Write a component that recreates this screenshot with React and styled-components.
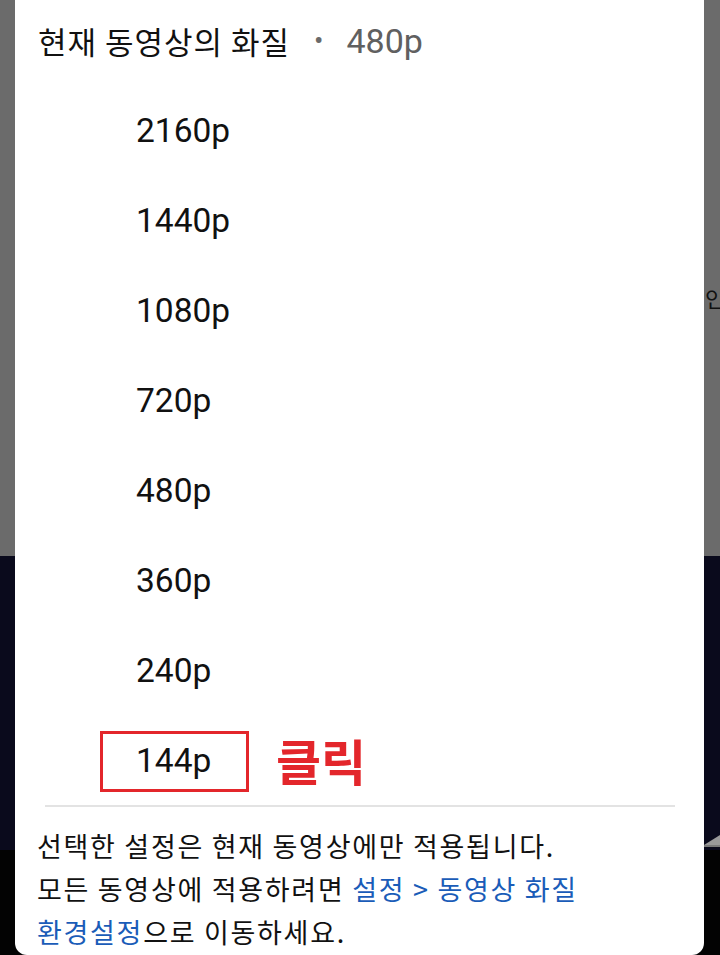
import React from "react";
import styled, { createGlobalStyle } from "styled-components";

const Global = createGlobalStyle`
  html, body { margin: 0; padding: 0; }
  body {
    width: 720px;
    height: 955px;
    overflow: hidden;
    background: linear-gradient(
      to bottom,
      #6b6b6b 0px, #6b6b6b 556px,
      #0a0a1c 556px, #0a0a1c 850px,
      #030303 850px
    );
    font-family: Roboto, "Noto Sans CJK KR", sans-serif;
  }
`;

const Stage = styled.div`
  display: flex;
  width: 720px;
  height: 955px;
`;

const SideStrip = styled.div`
  width: ${(p) => p.$w}px;
  flex: none;
  overflow: hidden;
  display: flex;
  flex-direction: column;
`;

const PeekText = styled.div`
  margin-top: 283px;
  margin-left: 1px;
  font-family: "Noto Sans CJK KR", sans-serif;
  font-size: 22px;
  line-height: 28px;
  color: #111;
  white-space: nowrap;
`;

const PeekShape = styled.svg`
  margin-top: 522px;
  display: block;
`;

const Sheet = styled.div`
  width: 689px;
  flex: none;
  background: #fff;
  border-radius: 0 0 12px 12px;
  display: flex;
  flex-direction: column;
`;

const Header = styled.div`
  height: 85px;
  box-sizing: border-box;
  padding-bottom: 4px;
  display: flex;
  align-items: center;
  padding-left: 23px;
  color: #111;
`;

const Title = styled.span`
  font-family: "Noto Sans CJK KR", sans-serif;
  font-size: 31px;
  letter-spacing: 1px;
`;

const Dot = styled.span`
  margin-left: 24px;
  margin-right: 23px;
  color: #6a6a6a;
  font-size: 28px;
`;

const Current = styled.span`
  color: #606060;
  font-size: 34px;
`;

const List = styled.div`
  display: flex;
  flex-direction: column;
`;

const Row = styled.div`
  height: 90px;
  display: flex;
  align-items: center;
  padding-left: 121px;
`;

const Label = styled.span`
  font-size: 33.5px;
  color: #111;
  ${(p) =>
    p.$highlighted &&
    `
    box-sizing: border-box;
    display: inline-flex;
    align-items: center;
    height: 61px;
    width: 149px;
    margin-left: -36px;
    margin-top: 3px;
    padding-left: 33px;
    padding-bottom: 2px;
    border: 3px solid #e3262b;
  `}
`;

const ClickNote = styled.span`
  margin-left: 27px;
  font-family: "Noto Sans CJK KR", sans-serif;
  font-weight: 700;
  font-size: 49px;
  color: #e3262b;
  margin-bottom: 2px;
`;

const Divider = styled.hr`
  margin: 0 29px 0 30px;
  border: none;
  height: 2px;
  background: #e3e3e3;
`;

const Footer = styled.p`
  margin: 0;
  padding: 17px 10px 0 22px;
  font-family: "Noto Sans CJK KR", sans-serif;
  font-size: 27px;
  letter-spacing: 1.7px;
  line-height: 43px;
  color: #111;
  white-space: nowrap;
`;

const Link = styled.span`
  color: #1a5cb8;
`;

const qualities = ["2160p", "1440p", "1080p", "720p", "480p", "360p", "240p"];

export default function App() {
  return (
    <>
      <Global />
      <Stage>
        <SideStrip $w={15} />
        <Sheet>
          <Header>
            <Title>현재 동영상의 화질</Title>
            <Dot>•</Dot>
            <Current>480p</Current>
          </Header>
          <List>
            {qualities.map((q) => (
              <Row key={q}>
                <Label>{q}</Label>
              </Row>
            ))}
            <Row>
              <Label $highlighted>144p</Label>
              <ClickNote>클릭</ClickNote>
            </Row>
          </List>
          <Divider />
          <Footer>
            선택한 설정은 현재 동영상에만 적용됩니다.
            <br />
            모든 동영상에 적용하려면 <Link>설정 &gt; 동영상 화질</Link>
            <br />
            <Link>환경설정</Link>으로 이동하세요.
          </Footer>
        </Sheet>
        <SideStrip $w={16}>
          <PeekText>인</PeekText>
          <PeekShape width="16" height="20" viewBox="0 0 16 20">
            <polygon points="0,12 16,2 16,12" fill="#9a9a9a" />
            <rect x="0" y="12" width="16" height="2" fill="#7a7a7a" />
          </PeekShape>
        </SideStrip>
      </Stage>
    </>
  );
}
